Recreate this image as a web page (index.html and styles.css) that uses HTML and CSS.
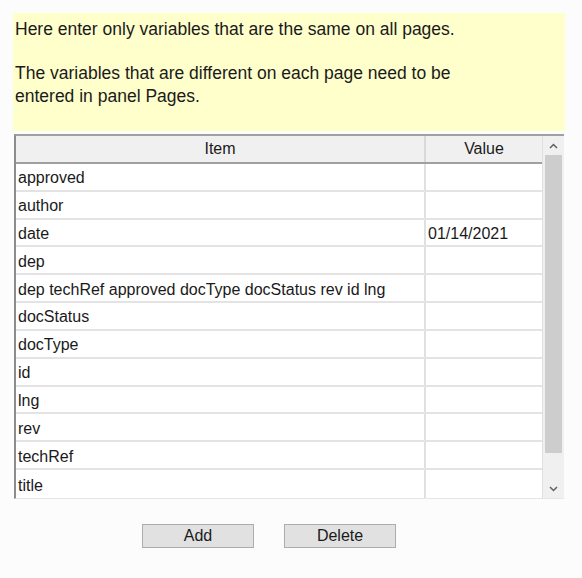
FILE: index.html
```html
<!DOCTYPE html>
<html>
<head>
<meta charset="utf-8">
<link rel="stylesheet" href="styles.css">
</head>
<body>
<div class="panel">
  <div class="note">
    <p>Here enter only variables that are the same on all pages.</p>
    <p>The variables that are different on each page need to be entered in panel Pages.</p>
  </div>
  <div class="grid">
    <div class="table">
      <div class="row head">
        <div class="c item">Item</div>
        <div class="c value">Value</div>
      </div>
      <div class="row"><div class="c item">approved</div><div class="c value"></div></div>
      <div class="row"><div class="c item">author</div><div class="c value"></div></div>
      <div class="row"><div class="c item">date</div><div class="c value">01/14/2021</div></div>
      <div class="row"><div class="c item">dep</div><div class="c value"></div></div>
      <div class="row"><div class="c item">dep techRef approved docType docStatus rev id lng</div><div class="c value"></div></div>
      <div class="row"><div class="c item">docStatus</div><div class="c value"></div></div>
      <div class="row"><div class="c item">docType</div><div class="c value"></div></div>
      <div class="row"><div class="c item">id</div><div class="c value"></div></div>
      <div class="row"><div class="c item">lng</div><div class="c value"></div></div>
      <div class="row"><div class="c item">rev</div><div class="c value"></div></div>
      <div class="row"><div class="c item">techRef</div><div class="c value"></div></div>
      <div class="row"><div class="c item">title</div><div class="c value"></div></div>
    </div>
    <div class="scrollbar">
      <div class="arrow">
        <svg width="9" height="6" viewBox="0 0 9 6"><path d="M1 5 L4.5 1.5 L8 5" fill="none" stroke="#606060" stroke-width="1.5"/></svg>
      </div>
      <div class="track"><div class="thumb"></div></div>
      <div class="arrow">
        <svg width="9" height="6" viewBox="0 0 9 6"><path d="M1 1 L4.5 4.5 L8 1" fill="none" stroke="#606060" stroke-width="1.5"/></svg>
      </div>
    </div>
  </div>
  <div class="buttons">
    <button class="btn">Add</button>
    <button class="btn">Delete</button>
  </div>
</div>
</body>
</html>
```
FILE: styles.css
```css
html, body {
  margin: 0;
  padding: 0;
  background: #fcfcfc;
  font-family: "Liberation Sans", Arial, sans-serif;
  color: #1a1a1a;
}
.panel {
  padding: 13px 17px 0 13px;
}
.note {
  background: #ffffcc;
  height: 118px;
  box-sizing: border-box;
  padding: 5px 2px 0 2px;
  font-size: 17.5px;
  line-height: 23px;
}
.note p {
  margin: 0 0 21px 0;
  width: 480px;
}
.grid {
  margin: 3px 0 0 1px;
  width: 550px;
  height: 365px;
  box-sizing: border-box;
  border-top: 2px solid #a0a0a0;
  border-left: 2px solid #8c8c8c;
  border-bottom: 1px solid #e6e6e6;
  display: flex;
  background: #fff;
}
.table {
  flex: 1;
  display: flex;
  flex-direction: column;
}
.row {
  display: flex;
  height: 28px;
  box-sizing: border-box;
  border-bottom: 2px solid #e3e3e3;
  font-size: 16px;
}
.row:last-child {
  border-bottom: none;
}
.row.head {
  background: #f0f0f0;
  border-bottom: 2px solid #a0a0a0;
}
.c {
  display: flex;
  align-items: center;
  padding: 3px 0 0 2px;
  box-sizing: border-box;
  white-space: nowrap;
  overflow: hidden;
}
.item {
  width: 410px;
  border-right: 2px solid #e0e0e0;
}
.value {
  flex: 1;
}
.head .c {
  justify-content: center;
  padding: 1px 0 0 0;
}
.head .item {
  border-right-color: #d8d8d8;
}
.scrollbar {
  width: 21px;
  background: #f0f0f0;
  border-left: 1px solid #e0e0e0;
  display: flex;
  flex-direction: column;
}
.arrow {
  height: 19px;
  display: flex;
  align-items: center;
  justify-content: center;
}
.track {
  flex: 1;
  padding: 0 2px;
}
.thumb {
  background: #cdcdcd;
  height: 298px;
}
.buttons {
  display: flex;
  gap: 30px;
  margin: 25px 0 0 129px;
}
.btn {
  width: 112px;
  height: 24px;
  background: #e1e1e1;
  border: 1px solid #adadad;
  font-family: "Liberation Sans", Arial, sans-serif;
  font-size: 16px;
  color: #1a1a1a;
  padding: 0;
}
```
